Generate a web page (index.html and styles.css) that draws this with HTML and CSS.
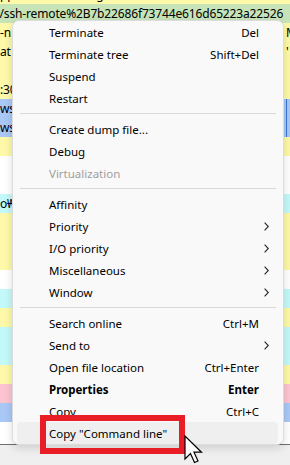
FILE: index.html
```html
<!DOCTYPE html>
<html lang="en">
<head>
    <meta charset="UTF-8">
    <title>Process menu</title>
    <link rel="stylesheet" href="styles.css">
</head>
<body>

    <!-- Process list behind the menu -->
    <div class="list">
        <div class="row yellow first"><span>ppData\Local\Programs\Microsoft VS Code\Code.exe" --type=utility --utility-sub-type=node.mojom.NodeService --lang=en-US --service-sandbox-type=none --dns-result-order=ipv4first --inspect-port=0 --user-data-dir="C:\Users\g</span></div>
        <div class="row green"><span class="shift">'/ssh-remote%2B7b22686f73744e616d65223a22526</span></div>
        <div class="row yellow"><span>-n</span><span class="right">M</span></div>
        <div class="row yellow"><span>at</span><span class="right">'</span></div>
        <div class="row yellow"><span></span></div>
        <div class="row yellow"><span>:30</span></div>
        <div class="row blue"><span>ws:</span><span class="right sel"></span></div>
        <div class="row blue"><span>ws:</span><span class="right sel"></span></div>
        <div class="row yellow"><span></span></div>
        <div class="row white"><span></span></div>
        <div class="row white"><span></span></div>
        <div class="row cyan"><span>o₩</span></div>
        <div class="row yellow"><span></span></div>
        <div class="row yellow"><span></span></div>
        <div class="row yellow"><span></span></div>
        <div class="row white"><span></span></div>
        <div class="row cyan"><span></span></div>
        <div class="row yellow"><span></span></div>
        <div class="row cyan"><span></span></div>
        <div class="row cyan"><span></span></div>
        <div class="row yellow"><span></span></div>
        <div class="row pink"><span></span></div>
        <div class="row blue"><span></span></div>
        <div class="row white"><span></span></div>
    </div>
    <div class="statusbar"></div>

    <!-- Context menu -->
    <div class="menu">
        <div class="item"><span class="label">Terminate</span><span class="key">Del</span><span class="sub"></span></div>
        <div class="item"><span class="label">Terminate tree</span><span class="key">Shift+Del</span><span class="sub"></span></div>
        <div class="item"><span class="label">Suspend</span><span class="sub"></span></div>
        <div class="item"><span class="label">Restart</span><span class="sub"></span></div>
        <div class="sep"></div>
        <div class="item"><span class="label">Create dump file...</span><span class="sub"></span></div>
        <div class="item"><span class="label">Debug</span><span class="sub"></span></div>
        <div class="item disabled"><span class="label">Virtualization</span><span class="sub"></span></div>
        <div class="sep"></div>
        <div class="item"><span class="label">Affinity</span><span class="sub"></span></div>
        <div class="item"><span class="label">Priority</span><span class="sub"><svg width="5" height="9" viewBox="0 0 5 9"><path d="M0.6 0.6 L4.3 4.5 L0.6 8.4" fill="none" stroke="#222" stroke-width="1.1"/></svg></span></div>
        <div class="item"><span class="label">I/O priority</span><span class="sub"><svg width="5" height="9" viewBox="0 0 5 9"><path d="M0.6 0.6 L4.3 4.5 L0.6 8.4" fill="none" stroke="#222" stroke-width="1.1"/></svg></span></div>
        <div class="item"><span class="label">Miscellaneous</span><span class="sub"><svg width="5" height="9" viewBox="0 0 5 9"><path d="M0.6 0.6 L4.3 4.5 L0.6 8.4" fill="none" stroke="#222" stroke-width="1.1"/></svg></span></div>
        <div class="item"><span class="label">Window</span><span class="sub"><svg width="5" height="9" viewBox="0 0 5 9"><path d="M0.6 0.6 L4.3 4.5 L0.6 8.4" fill="none" stroke="#222" stroke-width="1.1"/></svg></span></div>
        <div class="sep"></div>
        <div class="item"><span class="label">Search online</span><span class="key">Ctrl+M</span><span class="sub"></span></div>
        <div class="item"><span class="label">Send to</span><span class="sub"><svg width="5" height="9" viewBox="0 0 5 9"><path d="M0.6 0.6 L4.3 4.5 L0.6 8.4" fill="none" stroke="#222" stroke-width="1.1"/></svg></span></div>
        <div class="item"><span class="label">Open file location</span><span class="key">Ctrl+Enter</span><span class="sub"></span></div>
        <div class="item bold"><span class="label">Properties</span><span class="key">Enter</span><span class="sub"></span></div>
        <div class="item"><span class="label">Copy</span><span class="key">Ctrl+C</span><span class="sub"></span></div>
        <div class="item hover"><span class="label">Copy "Command line"</span><span class="sub"></span></div>
    </div>

    <!-- Annotation and pointer -->
    <div class="mark"></div>
    <svg class="pointer" width="20" height="30" viewBox="0 0 20 30">
        <path d="M1 1 L1 24 L6.5 18.5 L10.5 27.5 L14 26 L10 17.2 L17.5 17.2 Z" fill="#fff" stroke="#000" stroke-width="1.2" stroke-linejoin="miter"/>
    </svg>

</body>
</html>
```

FILE: styles.css
```css
* {
    margin: 0;
    padding: 0;
    box-sizing: border-box;
}
body {
    width: 290px;
    height: 465px;
    overflow: hidden;
    position: relative;
    background: #fff;
    font-family: "Segoe UI", "Noto Sans", sans-serif;
    font-size: 11.5px;
    color: #000;
}
.list {
    height: 444px;
    overflow: hidden;
    background: #fff;
}
.row {
    height: 19px;
    line-height: 19px;
    display: flex;
    white-space: nowrap;
    overflow: hidden;
    font-size: 12px;
    letter-spacing: -0.15px;
}
.row.first {
    margin-top: -15px;
}
.shift {
    margin-left: -3px;
}
.right {
    margin-left: auto;
    width: 4px;
    overflow: hidden;
}
.sel {
    border-left: 1px solid #3c78d8;
}
.yellow { background: #fdf9a8; }
.green  { background: #c7e4b9; }
.blue   { background: #a9c8f6; }
.cyan   { background: #c4f9f9; }
.pink   { background: #fcc4d0; }
.white  { background: #fff; }
.statusbar {
    height: 21px;
    border-top: 1px solid #6e6e6e;
    background: #efefef;
}
.menu {
    position: absolute;
    left: 12px;
    top: 20px;
    width: 272px;
    height: 425px;
    background: #f9f9f9;
    border: 1px solid #dcdcdc;
    border-radius: 7px;
    box-shadow: 0 3px 8px rgba(0, 0, 0, 0.14);
}
.item {
    display: flex;
    align-items: center;
    height: 22px;
    margin: 0 5px 0 4px;
    padding: 0 6px 0 32px;
    border-radius: 4px;
    white-space: nowrap;
}
.label {
    flex: 1;
}
.key {
    text-align: right;
}
.sub {
    width: 13px;
    padding-left: 5px;
    display: flex;
    align-items: center;
}
.disabled {
    color: #9e9e9e;
}
.bold {
    font-weight: bold;
}
.hover {
    background: #efefef;
}
.sep {
    height: 1px;
    margin: 4px 7px;
    background: #d8d8d8;
}
.mark {
    position: absolute;
    left: 40px;
    top: 415px;
    width: 145px;
    height: 39px;
    border: 6px solid #e81d25;
}
.pointer {
    position: absolute;
    left: 184px;
    top: 435px;
}
```
